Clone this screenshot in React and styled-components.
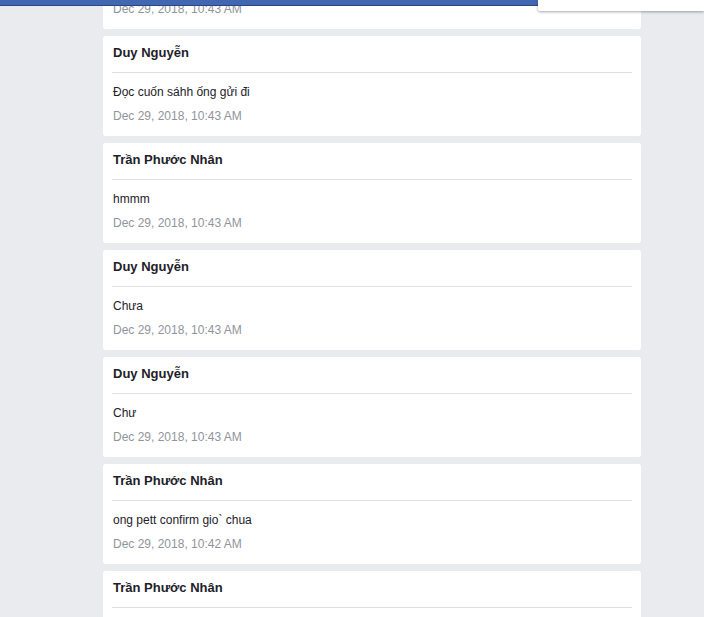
import styled, { createGlobalStyle } from 'styled-components'

const MESSAGES = [
  { id: 1, author: 'Trần Phước Nhân', text: 'ok', time: 'Dec 29, 2018, 10:43 AM' },
  { id: 2, author: 'Duy Nguyễn', text: 'Đọc cuốn sáhh ống gửi đi', time: 'Dec 29, 2018, 10:43 AM' },
  { id: 3, author: 'Trần Phước Nhân', text: 'hmmm', time: 'Dec 29, 2018, 10:43 AM' },
  { id: 4, author: 'Duy Nguyễn', text: 'Chưa', time: 'Dec 29, 2018, 10:43 AM' },
  { id: 5, author: 'Duy Nguyễn', text: 'Chư', time: 'Dec 29, 2018, 10:43 AM' },
  { id: 6, author: 'Trần Phước Nhân', text: 'ong pett confirm gio` chua', time: 'Dec 29, 2018, 10:42 AM' },
  { id: 7, author: 'Trần Phước Nhân', text: 'ừ', time: 'Dec 29, 2018, 10:42 AM' },
]

// ─── Global ───────────────────────────────────────────────────────────────────

const GlobalStyle = createGlobalStyle`
  html, body {
    margin: 0;
    padding: 0;
    background-color: #e9ebee;
    font-family: "Liberation Sans", Arial, sans-serif;
    overflow: hidden;
  }
`

// ─── Top chrome (overlays) ────────────────────────────────────────────────────

const TopBar = styled.div`
  position: fixed;
  top: 0;
  left: 0;
  right: 0;
  height: 5px;
  background-color: #4267b2;
  border-bottom: 1px solid #29487d;
  z-index: 10;
`

const Dropdown = styled.div`
  position: fixed;
  top: 0;
  left: 538px;
  right: 0;
  height: 11px;
  background-color: #fff;
  border-radius: 0 0 0 2px;
  box-shadow: 0 1px 3px rgba(0, 0, 0, 0.35);
  z-index: 11;
`

// ─── Feed ─────────────────────────────────────────────────────────────────────

const Page = styled.main`
  padding-left: 103px;
  height: 617px;
  overflow: hidden;
`

const Feed = styled.div`
  width: 538px;
  margin-top: -71px;
  display: flex;
  flex-direction: column;
  gap: 7px;
`

const Card = styled.article`
  background-color: #fff;
  border-radius: 3px;
  padding: 0 9px;
`

const Header = styled.header`
  padding: 9px 0 11px 1px;
  border-bottom: 1px solid #dddfe2;
`

const Author = styled.h4`
  margin: 0;
  font-size: 13px;
  line-height: 16px;
  font-weight: bold;
  color: #1d2129;
`

const Body = styled.div`
  padding: 11px 0 12px 1px;
  display: flex;
  flex-direction: column;
  gap: 8px;
`

const Text = styled.p`
  margin: 0;
  font-size: 12px;
  line-height: 16px;
  color: #1d2129;
`

const Time = styled.span`
  font-size: 12px;
  line-height: 16px;
  color: #90949c;
`

// ─── Component ────────────────────────────────────────────────────────────────

export default function App() {
  return (
    <>
      <GlobalStyle />
      <TopBar />
      <Dropdown />
      <Page>
        <Feed>
          {MESSAGES.map(m => (
            <Card key={m.id}>
              <Header>
                <Author>{m.author}</Author>
              </Header>
              <Body>
                <Text>{m.text}</Text>
                <Time>{m.time}</Time>
              </Body>
            </Card>
          ))}
        </Feed>
      </Page>
    </>
  )
}
